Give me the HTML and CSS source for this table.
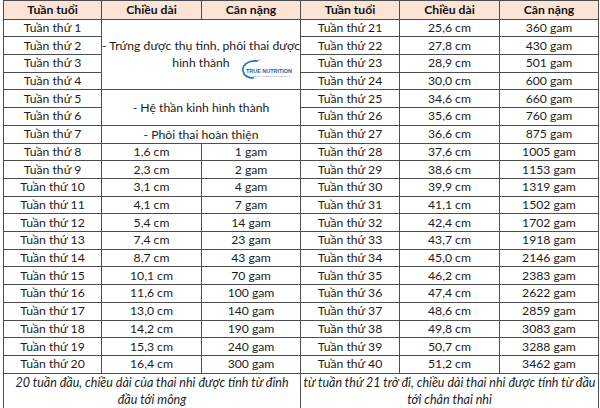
FILE: index.html
```html
<!DOCTYPE html>
<html lang="vi">
<head>
<meta charset="utf-8">
<link rel="stylesheet" href="styles.css">
</head>
<body>
<div class="wrap">
<table class="grid">
  <colgroup>
    <col class="c1"><col class="c2"><col class="c3"><col class="c4"><col class="c5"><col class="c6">
  </colgroup>
  <thead>
    <tr class="head">
      <th>Tuần tuổi</th><th>Chiều dài</th><th class="split">Cân nặng</th>
      <th>Tuần tuổi</th><th>Chiều dài</th><th>Cân nặng</th>
    </tr>
  </thead>
  <tbody>
    <tr><td>Tuần thứ 1</td><td colspan="2" rowspan="4" class="merge split">- Trứng được thụ tinh, phôi thai được<br>hình thành</td><td>Tuần thứ 21</td><td>25,6 cm</td><td>360 gam</td></tr>
    <tr><td>Tuần thứ 2</td><td>Tuần thứ 22</td><td>27,8 cm</td><td>430 gam</td></tr>
    <tr><td>Tuần thứ 3</td><td>Tuần thứ 23</td><td>28,9 cm</td><td>501 gam</td></tr>
    <tr><td>Tuần thứ 4</td><td>Tuần thứ 24</td><td>30,0 cm</td><td>600 gam</td></tr>
    <tr><td>Tuần thứ 5</td><td colspan="2" rowspan="2" class="merge split">- Hệ thần kinh hình thành</td><td>Tuần thứ 25</td><td>34,6 cm</td><td>660 gam</td></tr>
    <tr><td>Tuần thứ 6</td><td>Tuần thứ 26</td><td>35,6 cm</td><td>760 gam</td></tr>
    <tr><td>Tuần thứ 7</td><td colspan="2" class="merge split">- Phôi thai hoàn thiện</td><td>Tuần thứ 27</td><td>36,6 cm</td><td>875 gam</td></tr>
    <tr><td>Tuần thứ 8</td><td>1,6 cm</td><td class="split">1 gam</td><td>Tuần thứ 28</td><td>37,6 cm</td><td>1005 gam</td></tr>
    <tr><td>Tuần thứ 9</td><td>2,3 cm</td><td class="split">2 gam</td><td>Tuần thứ 29</td><td>38,6 cm</td><td>1153 gam</td></tr>
    <tr><td>Tuần thứ 10</td><td>3,1 cm</td><td class="split">4 gam</td><td>Tuần thứ 30</td><td>39,9 cm</td><td>1319 gam</td></tr>
    <tr><td>Tuần thứ 11</td><td>4,1 cm</td><td class="split">7 gam</td><td>Tuần thứ 31</td><td>41,1 cm</td><td>1502 gam</td></tr>
    <tr><td>Tuần thứ 12</td><td>5,4 cm</td><td class="split">14 gam</td><td>Tuần thứ 32</td><td>42,4 cm</td><td>1702 gam</td></tr>
    <tr><td>Tuần thứ 13</td><td>7,4 cm</td><td class="split">23 gam</td><td>Tuần thứ 33</td><td>43,7 cm</td><td>1918 gam</td></tr>
    <tr><td>Tuần thứ 14</td><td>8,7 cm</td><td class="split">43 gam</td><td>Tuần thứ 34</td><td>45,0 cm</td><td>2146 gam</td></tr>
    <tr><td>Tuần thứ 15</td><td>10,1 cm</td><td class="split">70 gam</td><td>Tuần thứ 35</td><td>46,2 cm</td><td>2383 gam</td></tr>
    <tr><td>Tuần thứ 16</td><td>11,6 cm</td><td class="split">100 gam</td><td>Tuần thứ 36</td><td>47,4 cm</td><td>2622 gam</td></tr>
    <tr><td>Tuần thứ 17</td><td>13,0 cm</td><td class="split">140 gam</td><td>Tuần thứ 37</td><td>48,6 cm</td><td>2859 gam</td></tr>
    <tr><td>Tuần thứ 18</td><td>14,2 cm</td><td class="split">190 gam</td><td>Tuần thứ 38</td><td>49,8 cm</td><td>3083 gam</td></tr>
    <tr><td>Tuần thứ 19</td><td>15,3 cm</td><td class="split">240 gam</td><td>Tuần thứ 39</td><td>50,7 cm</td><td>3288 gam</td></tr>
    <tr><td>Tuần thứ 20</td><td>16,4 cm</td><td class="split">300 gam</td><td>Tuần thứ 40</td><td>51,2 cm</td><td>3462 gam</td></tr>
    <tr class="foot">
      <td colspan="3" class="note split">20 tuần đầu, chiều dài của thai nhi được tính từ đỉnh<br>đầu tới mông</td>
      <td colspan="3" class="note">từ tuần thứ 21 trở đi, chiều dài thai nhi được tính từ đầu<br>tới chân thai nhi</td>
    </tr>
  </tbody>
</table>
<div class="logo">
  <svg width="58" height="26" viewBox="0 0 58 26">
    <circle cx="19" cy="3" r="0.8" fill="#7fb8e0"/>
    <circle cx="22" cy="2" r="0.6" fill="#9cc8e8"/>
    <circle cx="24" cy="4" r="0.5" fill="#9cc8e8"/>
    <path d="M18 4 C8 3 2 8 3 14 C4 19 9 21 14 21" fill="none" stroke="#1f6fb5" stroke-width="1.6"/>
    <text x="6" y="15.5" class="brand" textLength="46" lengthAdjust="spacingAndGlyphs">TRUE NUTRITION</text>
    <text x="13" y="20" class="tag" textLength="38" lengthAdjust="spacingAndGlyphs">SỨC KHỎE CHO MỌI NHÀ</text>
  </svg>
</div>
</div>
</body>
</html>
```

FILE: styles.css
```css
html, body {
  margin: 0;
  padding: 0;
  background: #ffffff;
}
body {
  width: 600px;
  height: 408px;
  overflow: hidden;
  font-family: "Lato", "Liberation Sans", sans-serif;
  color: #1c1c1c;
}
.wrap {
  position: relative;
  padding: 0 2px 0 3px;
}
.grid {
  width: 595px;
  border-collapse: collapse;
  table-layout: fixed;
  font-size: 12.2px;
}
.c1 { width: 98px; }
.c2 { width: 100px; }
.c3 { width: 99px; }
.c4 { width: 99px; }
.c5 { width: 100px; }
.c6 { width: 99px; }
.grid th, .grid td {
  border: 1px solid #4d4d4d;
  padding: 0;
  text-align: center;
  vertical-align: middle;
  white-space: nowrap;
  line-height: 16px;
}
.grid tr { height: 17.7px; }
.grid .head { height: 18.5px; }
.grid th {
  background: #fbe4d5;
  font-weight: 700;
  color: #111;
}
.grid .merge {
  line-height: 17px;
}
.grid .foot { height: 35px; }
.grid .note {
  font-style: italic;
  line-height: 17px;
  font-size: 12.5px;
}
.logo {
  position: absolute;
  left: 240px;
  top: 57px;
}
.brand {
  font-family: "Liberation Sans", sans-serif;
  font-weight: 700;
  font-size: 6px;
  fill: #1f5fa8;
}
.tag {
  font-family: "Liberation Sans", sans-serif;
  font-size: 2.4px;
  fill: #5a7fa8;
}
```
